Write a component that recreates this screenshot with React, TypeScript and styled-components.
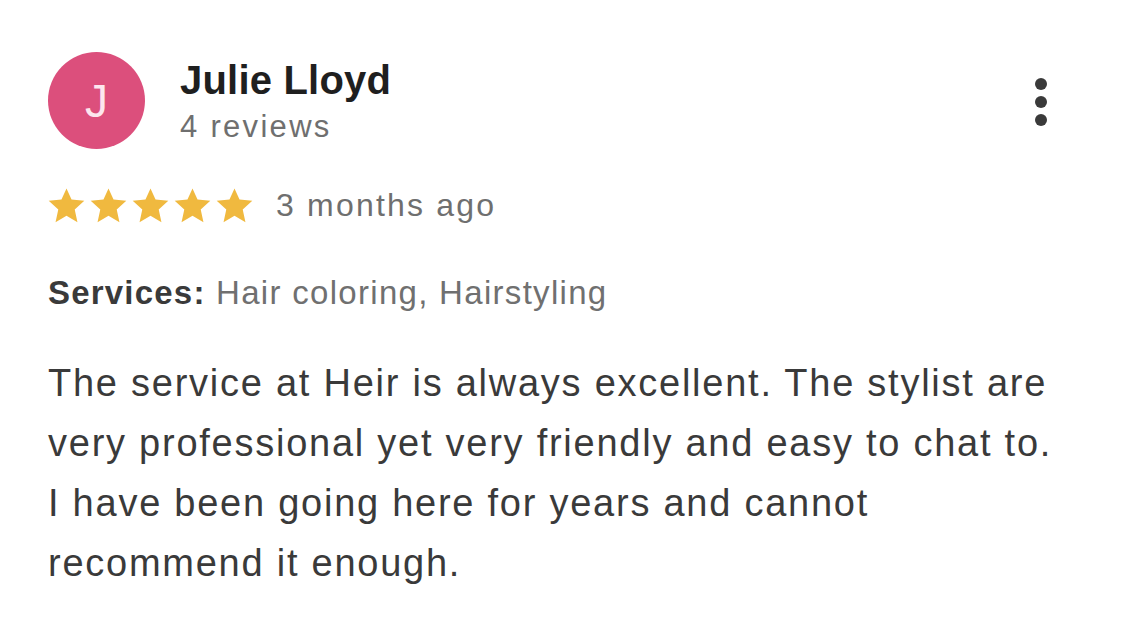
import React from 'react';
import styled, { createGlobalStyle } from 'styled-components';

const GlobalStyle = createGlobalStyle`
  html, body {
    margin: 0;
    padding: 0;
    background: #ffffff;
  }
  body {
    font-family: "Liberation Sans", Arial, sans-serif;
  }
`;

const Card = styled.div`
  width: 1125px;
  height: 631px;
  box-sizing: border-box;
  padding: 52px 0 0 48px;
  display: flex;
  flex-direction: column;
  background: #fff;
`;

const Header = styled.div`
  display: flex;
  align-items: flex-start;
  position: relative;
`;

const Avatar = styled.div`
  width: 97px;
  height: 97px;
  border-radius: 50%;
  background: #dc4f7c;
  color: #fde6ee;
  font-size: 46px;
  display: flex;
  align-items: center;
  justify-content: center;
  flex-shrink: 0;
`;

const Who = styled.div`
  display: flex;
  flex-direction: column;
  margin-left: 35px;
  padding-top: 5px;
`;

const Name = styled.div`
  font-size: 40px;
  font-weight: bold;
  color: #1f1f1f;
  line-height: 46px;
  letter-spacing: 0.2px;
`;

const Sub = styled.div`
  margin-top: 6px;
  font-size: 31px;
  color: #6f6f6f;
  letter-spacing: 2.3px;
  line-height: 36px;
`;

const MenuButton = styled.div`
  position: absolute;
  right: 78px;
  top: 26px;
  display: flex;
  flex-direction: column;
  gap: 6px;
`;

const Dot = styled.span`
  width: 12px;
  height: 12px;
  border-radius: 50%;
  background: #3a3a3a;
`;

const RatingRow = styled.div`
  display: flex;
  align-items: center;
  margin-top: 38px;
  height: 36px;
`;

const Stars = styled.div`
  display: flex;
  gap: 5px;
`;

const When = styled.span`
  margin-left: 23px;
  font-size: 32px;
  color: #6f6f6f;
  letter-spacing: 2.2px;
`;

const Services = styled.div`
  margin-top: 50px;
  font-size: 33px;
  color: #707070;
  letter-spacing: 1.3px;
  line-height: 40px;

  b {
    color: #3a3a3a;
    font-weight: bold;
    letter-spacing: 1.2px;
  }
`;

const Body = styled.p`
  margin: 40px 0 0;
  font-size: 38px;
  line-height: 60px;
  color: #3a3a3a;
  letter-spacing: 1.75px;
  white-space: nowrap;
`;

const Star = () => (
  <svg width="37" height="35" viewBox="0 0 24 23">
    <path
      d="M12 0.3L15.3 7.5L23.7 8.4L17.4 14.1L19.2 22.5L12 18.3L4.8 22.5L6.6 14.1L0.3 8.4L8.7 7.5Z"
      fill="#f0b93f"
    />
  </svg>
);

const App: React.FC = () => {
  return (
    <>
      <GlobalStyle />
      <Card>
        <Header>
          <Avatar>J</Avatar>
          <Who>
            <Name>Julie Lloyd</Name>
            <Sub>4 reviews</Sub>
          </Who>
          <MenuButton>
            <Dot />
            <Dot />
            <Dot />
          </MenuButton>
        </Header>
        <RatingRow>
          <Stars>
            {[0, 1, 2, 3, 4].map(i => (
              <Star key={i} />
            ))}
          </Stars>
          <When>3 months ago</When>
        </RatingRow>
        <Services>
          <b>Services:</b> Hair coloring, Hairstyling
        </Services>
        <Body>
          The service at Heir is always excellent. The stylist are
          <br />
          very professional yet very friendly and easy to chat to.
          <br />
          I have been going here for years and cannot
          <br />
          recommend it enough.
        </Body>
      </Card>
    </>
  );
};

export default App;
